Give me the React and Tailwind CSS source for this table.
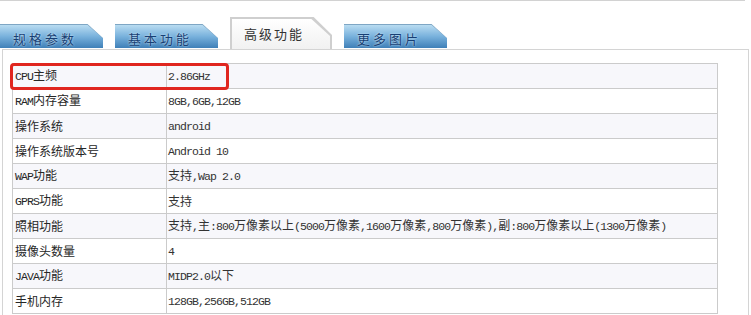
import React from "react";

const tabs = [
  { label: "规格参数" },
  { label: "基本功能" },
  { label: "高级功能", active: true },
  { label: "更多图片" },
];

const rows = [
  ["CPU主频", "2.86GHz"],
  ["RAM内存容量", "8GB,6GB,12GB"],
  ["操作系统", "android"],
  ["操作系统版本号", "Android 10"],
  ["WAP功能", "支持,Wap 2.0"],
  ["GPRS功能", "支持"],
  ["照相功能", "支持,主:800万像素以上(5000万像素,1600万像素,800万像素),副:800万像素以上(1300万像素)"],
  ["摄像头数量", "4"],
  ["JAVA功能", "MIDP2.0以下"],
  ["手机内存", "128GB,256GB,512GB"],
];

// 半角字符用等宽字体, 中文保持 12px
function Mixed({ text }) {
  const parts = text.split(/([\x20-\x7E]+)/).filter(Boolean);
  return parts.map((p, i) =>
    /^[\x20-\x7E]+$/.test(p) ? (
      <span key={i} className="font-['Liberation_Mono',monospace] text-[11.5px] tracking-[-0.9px] whitespace-pre">
        {p}
      </span>
    ) : (
      <span key={i}>{p}</span>
    )
  );
}

function Tab({ label, active }) {
  if (active) {
    return (
      <div className="w-[102px] h-[32px] bg-[#cfcfcf] [clip-path:polygon(0_0,82%_0,100%_56%,100%_100%,0_100%)]">
        <div className="h-full pt-[2px] px-[2px]">
          <div className="h-full bg-linear-to-b from-[#ffffff] to-[#f1f1f1] [clip-path:polygon(0_0,81%_0,100%_57%,100%_100%,0_100%)] flex items-center pl-[12px] text-[13px] tracking-[2px] text-[#333]">
            {label}
          </div>
        </div>
      </div>
    );
  }
  return (
    <div className="w-[103px] h-[24px] mb-[1px] bg-[#7ea6c4] [clip-path:polygon(0_0,85%_0,100%_58%,100%_100%,0_100%)]">
      <div className="h-full pt-px">
        <div className="h-full bg-linear-to-b from-[#b9dcf1] via-[#78b1dc] to-[#3f80b8] [clip-path:polygon(0_0,85%_0,100%_58%,100%_100%,0_100%)] flex items-center pl-[13px] pt-[4px] text-[13px] tracking-[3px] text-[#173f74] [text-shadow:0_0_2px_#dff1fb]">
          {label}
        </div>
      </div>
    </div>
  );
}

export default function App() {
  return (
    <div className="relative w-[751px] h-[315px] overflow-hidden bg-white text-[12px] text-[#262626] font-['Noto_Sans_CJK_SC',sans-serif]">
      <div className="w-[745px] h-px bg-[#d2d2d2]" />

      {/* 标签页 */}
      <div className="flex items-end gap-[12px] mt-[16px] h-[32px]">
        {tabs.map((t) => (
          <Tab key={t.label} label={t.label} active={t.active} />
        ))}
      </div>

      <div className="ml-[2px] w-[747px] h-[300px] border-t border-l border-r border-[#d4d4d4] pl-[9px] pt-[13px]">
        <table className="w-[706px] border-collapse">
          <tbody>
            {rows.map(([k, v], i) => (
              <tr key={k} className={i % 2 === 0 ? "bg-[#f7f7fb]" : "bg-white"}>
                <td className="w-[154px] h-[25px] border border-[#cbcbcb] pl-[2px] p-0 leading-none align-middle">
                  <Mixed text={k} />
                </td>
                <td className="h-[25px] border border-[#cbcbcb] pl-[1px] p-0 leading-none align-middle text-[#333]">
                  <Mixed text={v} />
                </td>
              </tr>
            ))}
          </tbody>
        </table>
      </div>

      {/* 红框标注 */}
      <div className="absolute left-[10px] top-[63px] w-[219px] h-[27px] border-[3px] border-[#e0261f] rounded-[4px]" />
    </div>
  );
}
